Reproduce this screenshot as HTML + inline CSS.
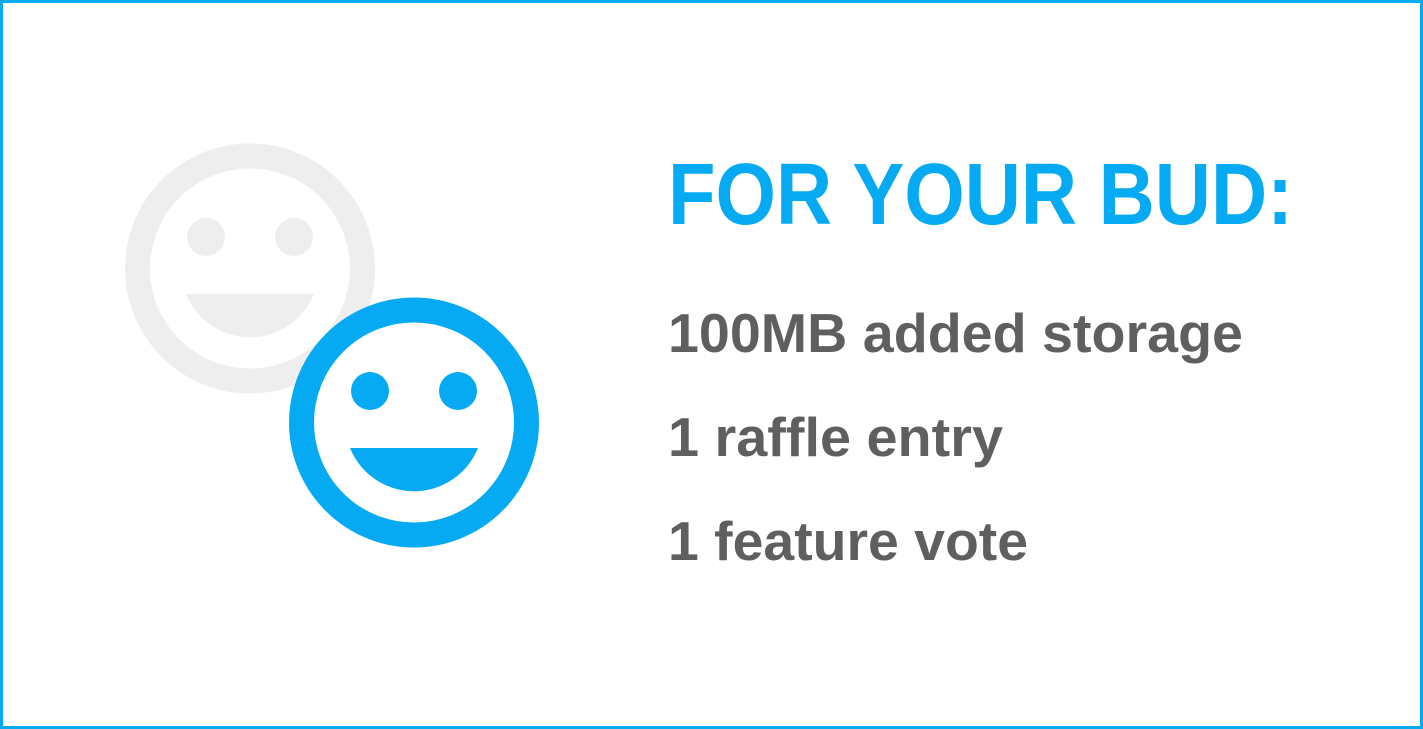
<!DOCTYPE html>
<html><head><meta charset="utf-8"><style>
html,body{margin:0;padding:0;background:#fff}
body{width:1423px;height:729px;overflow:hidden}
svg{display:block}
</style></head><body>
<svg width="1423" height="729" viewBox="0 0 1423 729" xmlns="http://www.w3.org/2000/svg">
<rect x="1.5" y="1.5" width="1420" height="726" fill="#fff" stroke="#05aaf2" stroke-width="3"/>
<g fill="#eeeeee">
<circle cx="250" cy="268.5" r="112.5" fill="none" stroke="#eeeeee" stroke-width="25"/>
<circle cx="206" cy="237" r="19"/><circle cx="294" cy="237" r="19"/>
<path d="M186 294 H314 A69 69 0 0 1 186 294 Z"/>
</g>
<g transform="translate(164,154)" fill="#05aaf2">
<circle cx="250" cy="268.5" r="125" fill="#fff"/>
<circle cx="250" cy="268.5" r="112.5" fill="none" stroke="#05aaf2" stroke-width="25"/>
<circle cx="206" cy="237" r="19"/><circle cx="294" cy="237" r="19"/>
<path d="M186 294 H314 A69 69 0 0 1 186 294 Z"/>
</g>
<g font-family="Liberation Sans, Arial, sans-serif" font-weight="bold">
<text x="668" y="224" font-size="87" fill="#05aaf2" textLength="625" lengthAdjust="spacingAndGlyphs">FOR YOUR BUD:</text>
<text x="668" y="352" font-size="55" fill="#5f5f5f" textLength="575" lengthAdjust="spacingAndGlyphs">100MB added storage</text>
<text x="668" y="456" font-size="55" fill="#5f5f5f" textLength="335" lengthAdjust="spacingAndGlyphs">1 raffle entry</text>
<text x="668" y="560" font-size="55" fill="#5f5f5f" textLength="360" lengthAdjust="spacingAndGlyphs">1 feature vote</text>
</g>
</svg>
</body></html>
